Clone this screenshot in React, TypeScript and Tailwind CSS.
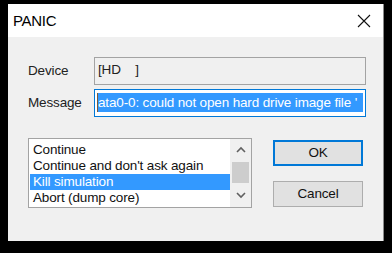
const ITEMS = ["Continue", "Continue and don't ask again", "Kill simulation", "Abort (dump core)"];

export default function App() {
  return (
    <div
      className="h-[253px] w-[392px] overflow-hidden bg-black pl-[8px] pt-[4px]"
      style={{ fontFamily: '"Liberation Sans", Arial, sans-serif' }}
    >
      <div className="flex h-[237px] w-[376px] flex-col border-r border-[#8a8a8a] bg-[#f0f0f0]">
        {/* Title bar */}
        <div className="flex h-[33px] items-center justify-between bg-white pl-[5px] pr-[10px]">
          <span className="text-[15px] leading-none tracking-[-0.3px] text-black">PANIC</span>
          <svg width="16" height="16" viewBox="0 0 16 16" className="mr-[1px]">
            <path d="M2 2 L14 14 M14 2 L2 14" stroke="#111" strokeWidth="1.1" />
          </svg>
        </div>

        {/* Body */}
        <div className="flex flex-col pl-[20px] pt-[20px] text-[13.5px] tracking-[-0.15px]">
          <div className="flex items-center">
            <span className="w-[66px] text-[#222]">Device</span>
            <div className="flex h-[28px] w-[272px] items-start border border-[#a3a3a3] bg-[#f0f0f0] pl-[3px] pt-[4px] leading-[16px] text-[#222]">
              <span className="whitespace-pre">[HD    ]</span>
            </div>
          </div>
          <div className="mt-[4px] flex items-center">
            <span className="w-[66px] text-[#222]">Message</span>
            <div className="flex h-[28px] w-[272px] items-start overflow-hidden border border-[#0078d7] bg-white pl-[2px] pr-[2px] pt-[3px]">
              <span className="h-[19px] w-[1px] shrink-0 bg-[#7a5a3a]" />
              <span className="h-[19px] flex-1 whitespace-nowrap bg-[#3399ff] leading-[19px] text-white">
                ata0-0: could not open hard drive image file '
              </span>
            </div>
          </div>

          <div className="mt-[21px] flex items-start">
            {/* Listbox */}
            <div className="flex h-[70px] w-[224px] border border-[#a3a3a3] bg-white">
              <div className="flex flex-1 flex-col pl-[1px] pt-[3px]">
                {ITEMS.map((t, i) => (
                  <div
                    key={t}
                    className={
                      "h-[16px] whitespace-nowrap pl-[3px] leading-[16px] " +
                      (i === 2 ? "bg-[#3399ff] text-white" : "text-[#111]")
                    }
                  >
                    {t}
                  </div>
                ))}
              </div>
              <div className="flex w-[21px] flex-col items-center bg-[#f0f0f0]">
                <div className="flex h-[21px] items-center justify-center">
                  <svg width="10" height="8" viewBox="0 0 10 8">
                    <path d="M1 6 L5 2 L9 6" fill="none" stroke="#606060" strokeWidth="1.6" />
                  </svg>
                </div>
                <div className="mt-[2px] h-[21px] w-[17px] bg-[#cdcdcd]" />
                <div className="flex flex-1 items-center justify-center">
                  <svg width="10" height="8" viewBox="0 0 10 8">
                    <path d="M1 2 L5 6 L9 2" fill="none" stroke="#606060" strokeWidth="1.6" />
                  </svg>
                </div>
              </div>
            </div>

            {/* Buttons */}
            <div className="ml-[21px] mt-[2px] flex flex-col gap-[15px]">
              <button className="flex h-[26px] w-[90px] items-center justify-center border-2 border-[#0078d7] bg-[#e1e1e1] text-[#111]">
                OK
              </button>
              <button className="flex h-[26px] w-[90px] items-center justify-center border border-[#adadad] bg-[#e1e1e1] text-[#111]">
                Cancel
              </button>
            </div>
          </div>
        </div>
      </div>
    </div>
  );
}
